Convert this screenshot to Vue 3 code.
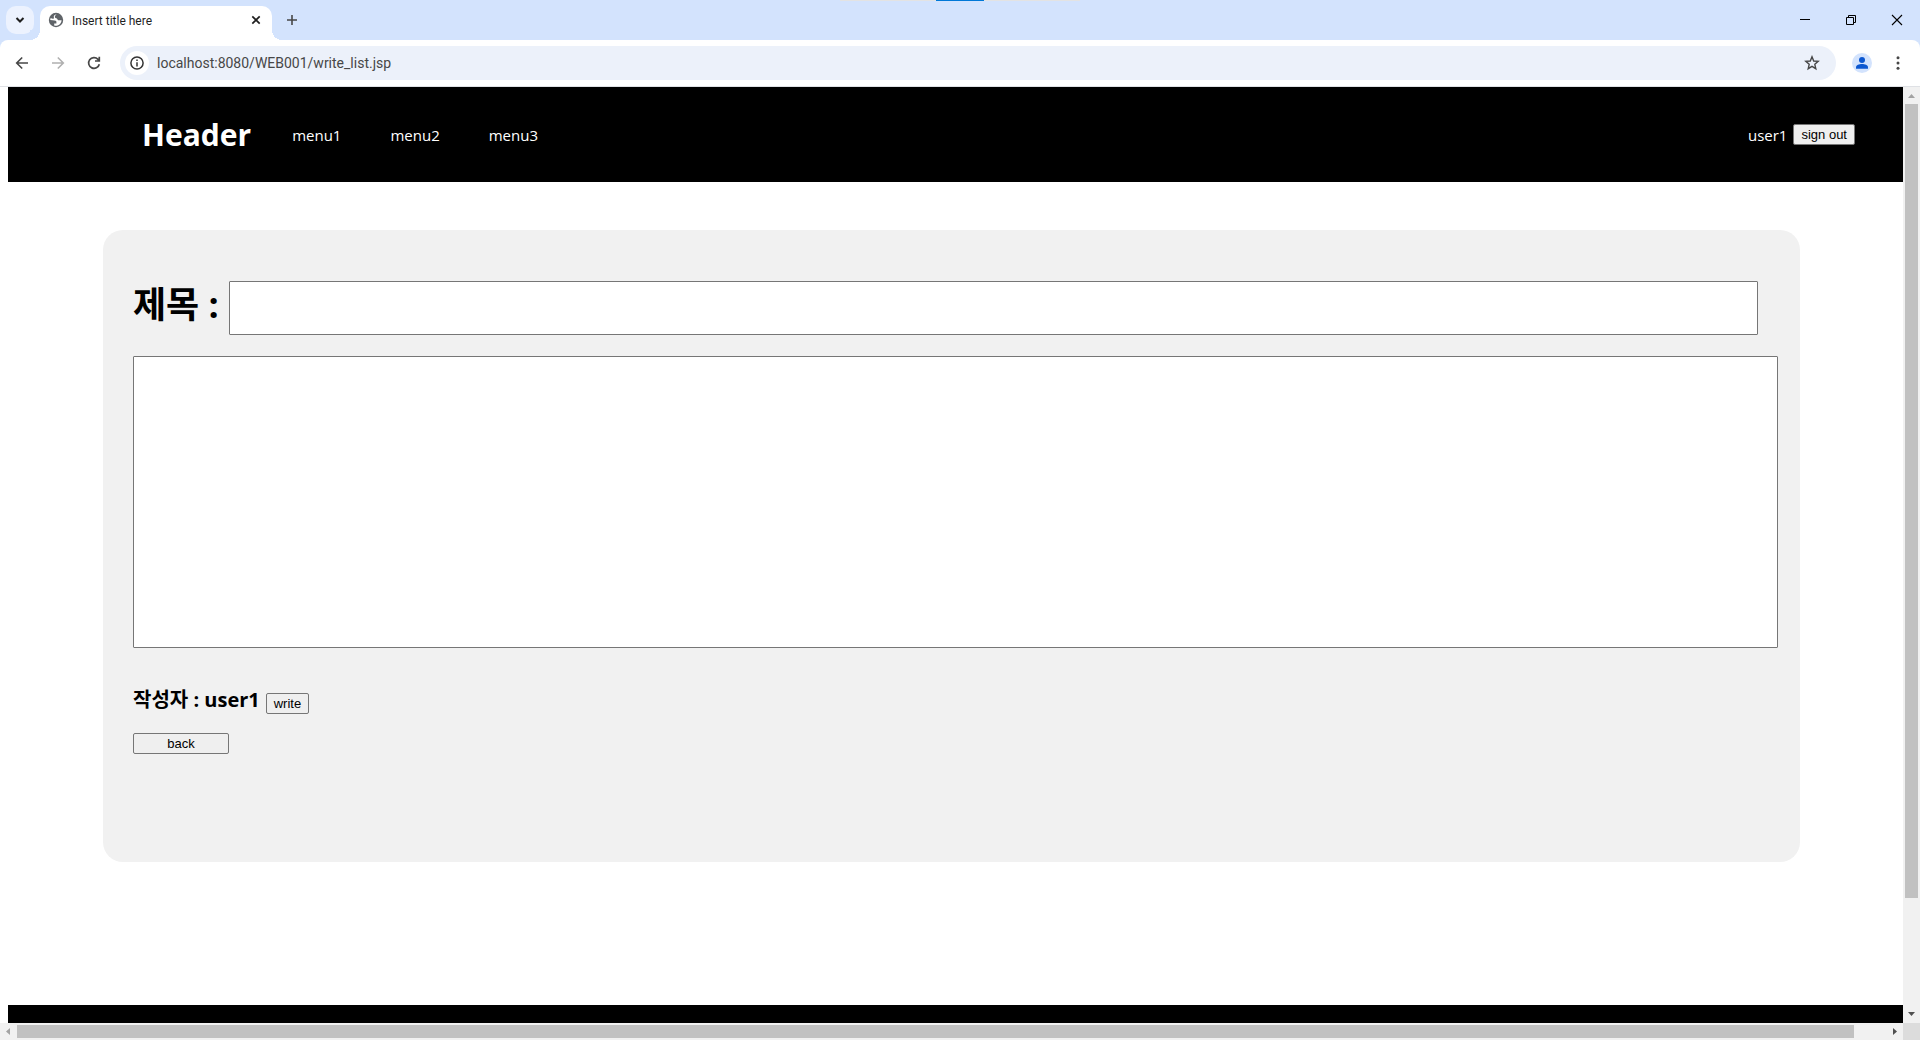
<script setup>
import { ref } from 'vue'

const menus = ['menu1', 'menu2', 'menu3']
const user = ref('user1')
const url = ref('localhost:8080/WEB001/write_list.jsp')
const title = ref('')
const content = ref('')
</script>

<template>
  <div class="browser">
    <div class="tab-strip">
      <div class="top-line"><span></span></div>
      <button class="tab-search" type="button" aria-label="Search tabs">
        <svg width="10" height="8" viewBox="0 0 10 8"><path d="M1.5 2L5 5.5L8.5 2" fill="none" stroke="#1f1f1f" stroke-width="2" /></svg>
      </button>
      <div class="tab">
        <svg class="globe" width="16" height="16" viewBox="0 0 16 16">
          <circle cx="8" cy="8" r="7.2" fill="#5f6368" />
          <path d="M9 2.1C7.4 3.3 6.5 4.2 7 5.5C7.4 6.5 9 6 9.4 7.2C9.8 8.3 11.3 8.6 13.6 8.2C13.4 10.5 12 12.6 9.6 13.5C8.4 13.9 7 13.8 6.2 13.4V11.6H8.4V9.6C7.8 8.4 6 8.2 2.2 8C2.3 7.2 2.4 6.8 2.7 6.1C4 6.8 5.2 7.1 5.8 6.4C6.3 5.5 5.3 4.8 6 3.8C6.6 3.2 7.3 2.6 9 2.1Z" fill="#fff" />
        </svg>
        <span class="tab-title">Insert title here</span>
        <button class="tab-close" type="button" aria-label="Close tab">
          <svg width="10" height="10" viewBox="0 0 10 10"><path d="M1.3 1.3L8.7 8.7M8.7 1.3L1.3 8.7" stroke="#1f1f1f" stroke-width="1.7" /></svg>
        </button>
      </div>
      <button class="new-tab" type="button" aria-label="New tab">
        <svg width="12" height="12" viewBox="0 0 12 12"><path d="M6 1V11M1 6H11" stroke="#474747" stroke-width="1.6" /></svg>
      </button>
      <div class="window-buttons">
        <button type="button" aria-label="Minimize">
          <svg width="12" height="12" viewBox="0 0 12 12"><path d="M1 5.5H11" stroke="#000" /></svg>
        </button>
        <button type="button" aria-label="Restore">
          <svg width="12" height="12" viewBox="0 0 12 12"><path d="M1.5 3.5H8.5V10.5H1.5ZM3.5 3.5V1.5H10.5V8.5H8.5" fill="none" stroke="#000" /></svg>
        </button>
        <button type="button" aria-label="Close">
          <svg width="12" height="12" viewBox="0 0 12 12"><path d="M1 1L11 11M11 1L1 11" stroke="#000" stroke-width="1.1" /></svg>
        </button>
      </div>
    </div>

    <div class="toolbar">
      <div class="nav-buttons">
        <button type="button" aria-label="Back">
          <svg width="14" height="14" viewBox="0 0 14 14"><path d="M13 7H2M7.2 1.5L1.7 7L7.2 12.5" fill="none" stroke="#474747" stroke-width="1.6" /></svg>
        </button>
        <button type="button" aria-label="Forward" disabled>
          <svg width="14" height="14" viewBox="0 0 14 14"><path d="M1 7H12M6.8 1.5L12.3 7L6.8 12.5" fill="none" stroke="#b0b0b0" stroke-width="1.6" /></svg>
        </button>
        <button type="button" aria-label="Reload">
          <svg width="14" height="14" viewBox="0 0 14 14"><path d="M12.3 8.2A5.4 5.4 0 1 1 11 3.3L12 4.4M12.3 .8V5H8" fill="none" stroke="#474747" stroke-width="1.7" /></svg>
        </button>
      </div>
      <div class="address">
        <span class="site-info">
          <svg width="14" height="14" viewBox="0 0 14 14"><circle cx="7" cy="7" r="6.1" fill="none" stroke="#333" stroke-width="1.5" /><path d="M7 6.2V10.4M7 3.5V5" stroke="#333" stroke-width="1.5" /></svg>
        </span>
        <input v-model="url" class="url" type="text" aria-label="Address">
        <button type="button" aria-label="Bookmark">
          <svg width="16" height="16" viewBox="0 0 16 16"><path d="M8 1.8L9.7 6L14.2 6.4L10.8 9.3L11.8 13.7L8 11.3L4.2 13.7L5.2 9.3L1.8 6.4L6.3 6Z" fill="none" stroke="#474747" stroke-width="1.4" /></svg>
        </button>
      </div>
      <button class="profile" type="button" aria-label="Profile">
        <svg width="20" height="20" viewBox="0 0 20 20"><circle cx="10" cy="10" r="10" fill="#d3e3fd" /><circle cx="10" cy="7" r="3" fill="#0b57d0" /><path d="M4 15.8V14.2C4 12.2 7.2 11.1 10 11.1S16 12.2 16 14.2V15.8Z" fill="#0b57d0" /></svg>
      </button>
      <button class="more" type="button" aria-label="More">
        <svg width="4" height="14" viewBox="0 0 4 14" fill="#474747"><circle cx="2" cy="1.7" r="1.5" /><circle cx="2" cy="7" r="1.5" /><circle cx="2" cy="12.3" r="1.5" /></svg>
      </button>
    </div>

    <div class="viewport">
      <div class="page">
        <header class="header">
          <h1>Header</h1>
          <nav>
            <a v-for="menu in menus" :key="menu" href="#">{{ menu }}</a>
          </nav>
          <div class="login">
            <span>{{ user }}</span>
            <button class="btn" type="button">sign out</button>
          </div>
        </header>

        <main>
          <form class="card" @submit.prevent>
            <div class="title-row">
              <label for="title">제목 :</label>
              <input id="title" v-model="title" type="text">
            </div>
            <textarea v-model="content" aria-label="내용"></textarea>
            <div class="writer">
              <strong>작성자 : {{ user }}</strong>
              <button class="btn" type="submit">write</button>
            </div>
            <button class="btn back" type="button">back</button>
          </form>
        </main>

        <footer class="footer"></footer>
      </div>

      <div class="scroll vertical">
        <svg width="17" height="17" viewBox="0 0 17 17"><path d="M5 11L8.5 7L12 11Z" fill="#a3a3a3" /></svg>
        <div class="track"><div class="thumb"></div></div>
        <svg width="17" height="17" viewBox="0 0 17 17"><path d="M5 6L8.5 10L12 6Z" fill="#505050" /></svg>
      </div>
      <div class="scroll horizontal">
        <svg width="17" height="17" viewBox="0 0 17 17"><path d="M10 5L6 8.5L10 12Z" fill="#a3a3a3" /></svg>
        <div class="track"><div class="thumb"></div></div>
        <svg width="17" height="17" viewBox="0 0 17 17"><path d="M7 5L11 8.5L7 12Z" fill="#505050" /></svg>
      </div>
      <div class="corner"></div>
    </div>
  </div>
</template>

<style>
body {
  margin: 0;
  background: #fff;
}
</style>

<style scoped>
* {
  box-sizing: border-box;
}

.browser {
  display: flex;
  flex-direction: column;
  height: 100vh;
  overflow: hidden;
  font-family: "Open Sans", "Noto Sans CJK KR", sans-serif;
  font-size: 15px;
  color: #000;
}

svg {
  display: block;
  flex: none;
}

button {
  display: flex;
  align-items: center;
  justify-content: center;
  padding: 0;
  border: 0;
  background: none;
}

/* tab strip */
.tab-strip {
  position: relative;
  display: flex;
  align-items: center;
  flex: none;
  height: 40px;
  padding-left: 6px;
  background: #d3e3fd;
}

.top-line {
  position: absolute;
  top: 0;
  left: 50%;
  display: flex;
  justify-content: center;
  width: 240px;
  height: 1px;
  margin-left: -120px;
  background: #e3e3e3;
}

.top-line span {
  width: 48px;
  background: #0078d7;
}

.tab-search {
  width: 28px;
  height: 28px;
  border-radius: 10px;
  background: #ecf2fe;
}

.tab {
  position: relative;
  display: flex;
  align-items: center;
  align-self: flex-end;
  width: 232px;
  height: 34px;
  margin-left: 6px;
  padding: 0 10px 6px 8px;
  border-radius: 10px 10px 0 0;
  background: #fff;
}

.tab::before,
.tab::after {
  content: "";
  position: absolute;
  bottom: 0;
  width: 10px;
  height: 10px;
}

.tab::before {
  right: 100%;
  background: radial-gradient(circle at 0 0, #d3e3fd 10px, #fff 10px);
}

.tab::after {
  left: 100%;
  background: radial-gradient(circle at 100% 0, #d3e3fd 10px, #fff 10px);
}

.tab-title {
  flex: 1;
  margin-left: 8px;
  padding-top: 2px;
  font-family: Roboto, sans-serif;
  font-size: 12px;
  line-height: 16px;
  color: #1f1f1f;
}

.tab-close {
  width: 12px;
  height: 16px;
}

.new-tab {
  width: 28px;
  height: 28px;
  margin-left: 6px;
}

.window-buttons {
  display: flex;
  margin-left: auto;
}

.window-buttons button {
  width: 46px;
  height: 40px;
}

/* toolbar */
.toolbar {
  display: flex;
  align-items: center;
  flex: none;
  height: 47px;
  padding: 0 20px 0 5px;
  border-bottom: 1px solid #dfe1e5;
  border-radius: 8px 8px 0 0;
  background: #fff;
  box-shadow: 0 -8px 0 #d3e3fd;
}

/* keeps the tab above the toolbar's corner fill */
.tab-strip {
  z-index: 1;
}

.nav-buttons {
  display: flex;
  gap: 2px;
}

.nav-buttons button {
  width: 34px;
  height: 34px;
}

.address {
  display: flex;
  align-items: center;
  flex: 1;
  height: 34px;
  margin-left: 9px;
  padding: 0 16px 0 5px;
  border-radius: 17px;
  background: #ecf1fa;
}

.site-info {
  display: flex;
  align-items: center;
  justify-content: center;
  width: 24px;
  height: 24px;
  border-radius: 50%;
  background: #fff;
}

.url {
  flex: 1;
  margin-left: 8px;
  padding: 0;
  border: 0;
  outline: 0;
  background: none;
  font-family: Roboto, sans-serif;
  font-size: 14px;
  line-height: 20px;
  color: #474747;
}

.profile {
  margin-left: 16px;
}

.more {
  margin-left: 24px;
}

/* page area */
.viewport {
  display: grid;
  grid-template-columns: minmax(0, 1fr) 17px;
  grid-template-rows: minmax(0, 1fr) 17px;
  flex: 1;
  min-height: 0;
}

.page {
  padding-left: 8px;
  overflow: hidden;
}

.header {
  display: flex;
  align-items: center;
  height: 95px;
  padding: 0 48px 0 134px;
  background: #000;
  color: #fff;
}

.header h1 {
  margin: 0;
  font-size: 30px;
  line-height: 40px;
}

.header nav {
  display: flex;
  gap: 49px;
  margin-left: 41px;
}

.header a {
  color: #fff;
  text-decoration: none;
}

.login {
  display: flex;
  align-items: center;
  gap: 6px;
  margin-left: auto;
}

.btn {
  height: 21px;
  padding: 0 7px;
  border: 1px solid #767676;
  border-radius: 2px;
  background: #efefef;
  font-family: "Liberation Sans", Arial, sans-serif;
  font-size: 13px;
  line-height: 16px;
  color: #000;
}

main {
  padding: 48px 103px 143px 95px;
}

.card {
  min-height: 632px;
  padding: 51px 22px 24px 30px;
  border-radius: 20px;
  background: #f1f1f1;
}

.title-row {
  display: flex;
  align-items: flex-start;
  gap: 10px;
  padding-right: 20px;
}

.title-row label {
  font-size: 36px;
  font-weight: bold;
  line-height: 48px;
}

.title-row input {
  flex: 1;
  min-width: 0;
  height: 54px;
  padding: 0 8px;
  border: 1px solid #767676;
  border-radius: 1px;
  background: #fff;
  font-size: 32px;
}

textarea {
  display: block;
  width: 100%;
  height: 292px;
  margin-top: 21px;
  padding: 8px;
  border: 1px solid #767676;
  border-radius: 1px;
  background: #fff;
  resize: none;
}

.writer {
  display: flex;
  align-items: flex-end;
  gap: 6px;
  margin-top: 40px;
  font-size: 20px;
  line-height: 24px;
}

.writer strong {
  padding-bottom: 2px;
}

.back {
  width: 96px;
  margin-top: 19px;
}

.footer {
  height: 95px;
  background: #000;
}

/* scrollbars */
.scroll {
  display: flex;
  background: #f1f1f1;
}

.track {
  flex: 1;
}

.thumb {
  background: #c1c1c1;
}

.vertical {
  flex-direction: column;
}

.vertical .thumb {
  width: 13px;
  height: 88%;
  margin-left: 2px;
}

.vertical .track {
  min-height: 0;
}

.horizontal .thumb {
  width: 98.3%;
  height: 13px;
  margin-top: 2px;
}

.corner {
  background: #dcdcdc;
}
</style>
